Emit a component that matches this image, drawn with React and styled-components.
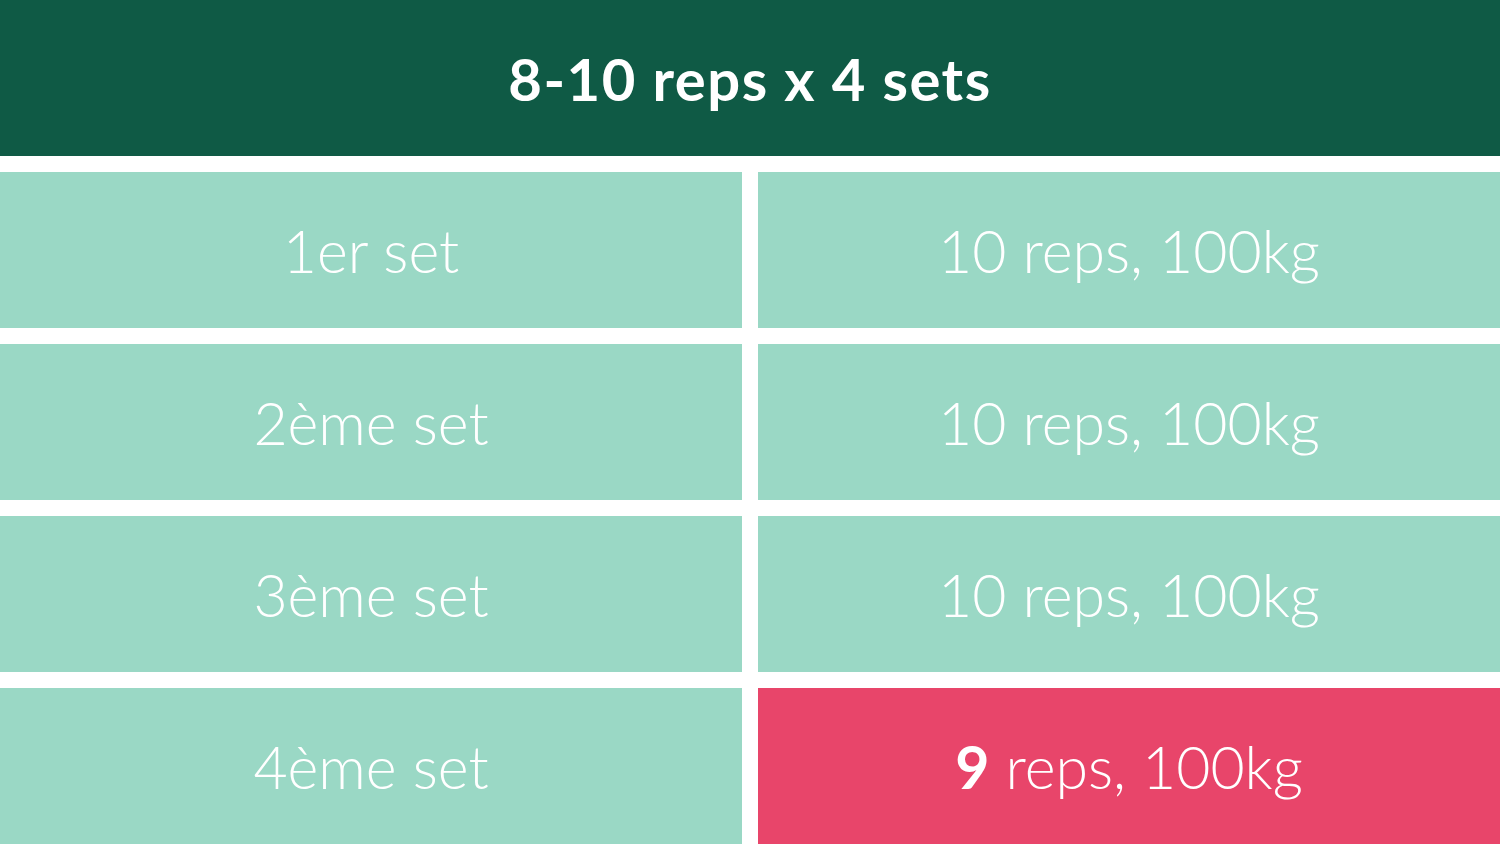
import React from "react";
import styled, { createGlobalStyle } from "styled-components";

const Global = createGlobalStyle`
  html, body { margin: 0; padding: 0; background: #ffffff; }
  body { font-family: Lato, "Open Sans", sans-serif; }
`;

const Page = styled.div`
  width: 1500px;
  height: 844px;
  display: flex;
  flex-direction: column;
  gap: 16px;
  background: #ffffff;
  overflow: hidden;
`;

const Header = styled.div`
  height: 156px;
  flex: none;
  background: #0f5a45;
  color: #ffffff;
  display: flex;
  align-items: center;
  justify-content: center;
  font-family: Lato, sans-serif;
  font-weight: 700;
  font-size: 58px;
  letter-spacing: 1.5px;
  box-sizing: border-box;
`;

const Grid = styled.div`
  display: grid;
  grid-template-columns: 742px 742px;
  grid-auto-rows: 156px;
  column-gap: 16px;
  row-gap: 16px;
`;

const Cell = styled.div`
  background: ${(p) => (p.$alert ? "#e8456a" : "#9ad8c5")};
  color: #ffffff;
  display: flex;
  align-items: center;
  justify-content: center;
  font-family: Lato, sans-serif;
  font-weight: 300;
  font-size: 59px;
  letter-spacing: 0px;
  box-sizing: border-box;
`;

const Strong = styled.span`
  font-weight: 700;
`;

const rows = ["1er set", "2ème set", "3ème set", "4ème set"];

export default function App() {
  return (
    <>
      <Global />
      <Page>
        <Header>8-10 reps x 4 sets</Header>
        <Grid>
          {rows.map((r, i) => (
            <React.Fragment key={r}>
              <Cell>{r}</Cell>
              {i < 3 ? (
                <Cell>10 reps, 100kg</Cell>
              ) : (
                <Cell $alert>
                  <Strong>9</Strong>&nbsp;reps, 100kg
                </Cell>
              )}
            </React.Fragment>
          ))}
        </Grid>
      </Page>
    </>
  );
}
